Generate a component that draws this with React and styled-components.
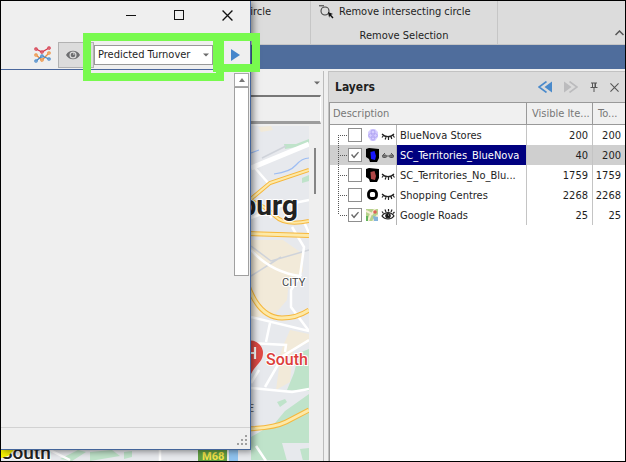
import { useState } from "react";
import styled, { createGlobalStyle } from "styled-components";

const GlobalStyle = createGlobalStyle`
  * {
    box-sizing: border-box;
  }
  body {
    margin: 0;
    background: #efefef;
    color: #1e1e1e;
    font-family: "DejaVu Sans Condensed", "Noto Sans", sans-serif;
    font-size: 11px;
    line-height: 14px;
  }
  button, input, select {
    font: inherit;
    color: inherit;
    margin: 0;
    border-radius: 0;
  }
  svg {
    display: block;
    flex: none;
  }
`;

const Desktop = styled.div`
  position: relative;
  display: flex;
  flex-direction: column;
  height: 100vh;
  overflow: hidden;
  border: 1px solid #000;
  background: #efefef;
`;

/* ---------- ribbon ---------- */

const Ribbon = styled.header`
  display: flex;
  flex: none;
  height: 44px;
  background: #dcdcdc;
  border-bottom: 1px solid #c6c6c6;
`;

const RibbonGroup = styled.div`
  display: flex;
  flex-direction: column;
  justify-content: space-between;
  flex: none;
  width: ${({ $width }) => $width}px;
  padding: 4px 8px 0;
  border-right: 1px solid #c6c6c6;
`;

const RibbonButton = styled.button`
  display: flex;
  align-items: center;
  align-self: ${({ $end }) => ($end ? "flex-end" : "flex-start")};
  gap: 5px;
  padding: 0;
  margin-right: ${({ $end }) => ($end ? 31 : 0)}px;
  border: 0;
  background: none;
  white-space: nowrap;
`;

const RibbonCaption = styled.div`
  height: 15px;
  text-align: center;
`;

const RibbonEnd = styled.div`
  display: flex;
  flex: 1;
  align-items: flex-end;
  justify-content: flex-end;
  padding: 0 1px 8px 0;
`;

const IconButton = styled.button`
  display: flex;
  align-items: center;
  justify-content: center;
  padding: 0;
  border: 0;
  background: none;
`;

const BlueBand = styled.div`
  flex: none;
  height: 24px;
  background: #4f6d9c;
`;

/* ---------- work area ---------- */

const WorkArea = styled.main`
  display: flex;
  flex: 1;
  min-height: 0;
  gap: 4px;
  padding-top: 2px;
`;

const MapPanel = styled.section`
  display: flex;
  flex-direction: column;
  flex: none;
  width: 323px;
  border-right: 1px solid #bcbcbc;
`;

const MapTabs = styled.div`
  display: flex;
  flex: none;
  align-items: center;
  justify-content: flex-end;
  height: 24px;
  padding: 0 3px 0 0;
`;

const MapToolbar = styled.div`
  flex: none;
  height: 29px;
  margin-right: 2px;
  border: 1px solid #fff;
  border-top: 2px solid #777;
  border-bottom: 3px solid #9c9c9c;
`;

const MapBody = styled.div`
  display: flex;
  flex: 1;
  min-height: 0;
  padding-top: 2px;
  overflow: hidden;
`;

const MapScroll = styled.div`
  width: 2px;
  height: 46px;
  margin: 22px 0 0 5px;
  background: #858585;
`;

/* ---------- layers ---------- */

const LayersPanel = styled.section`
  display: flex;
  flex-direction: column;
  flex: 1;
  min-width: 0;
  border: 1px solid #c2c2c2;
  border-width: 1px 0 0 1px;
`;

const LayersHeader = styled.div`
  display: flex;
  flex: none;
  align-items: center;
  justify-content: space-between;
  height: 30px;
  padding: 0 6px;
  background: #dbdbdb;
`;

const LayersTitle = styled.h2`
  margin: 0;
  font-size: 12px;
  font-weight: bold;
`;

const HeaderTools = styled.div`
  display: flex;
  align-items: center;
  gap: 12px;
`;

const LayersBody = styled.div`
  flex: 1;
  background: #fff;
  border-top: 1px solid #999;
  border-left: 1px solid #999;
`;

const LayersTable = styled.table`
  width: 100%;
  table-layout: fixed;
  border-collapse: separate;
  border-spacing: 0;
`;

const HeadCell = styled.th`
  width: ${({ $width }) => ($width ? `${$width}px` : "auto")};
  height: 22px;
  padding: 0 0 0 ${({ $width }) => ($width ? 5 : 3)}px;
  overflow: hidden;
  text-overflow: ellipsis;
  white-space: nowrap;
  text-align: left;
  font-weight: normal;
  color: #777;
  background: #f0f0f0;
  border-bottom: 1px solid #999;
  border-left: ${({ $width }) => ($width ? "1px solid #999" : "0")};
`;

const LayerRow = styled.tr`
  background: ${({ $selected }) => ($selected ? "#cfcfcf" : "#fff")};
`;

const LayerCell = styled.td`
  height: 20px;
  padding: 0;
`;

const CountCell = styled.td`
  height: 20px;
  padding: 1px 4px 0 0;
  text-align: right;
  border-left: 1px solid #c4c4c4;
`;

const LayerLine = styled.div`
  display: flex;
  align-items: center;
  height: 20px;
`;

const CheckBox = styled.input`
  appearance: none;
  display: grid;
  place-items: center;
  flex: none;
  width: 14px;
  height: 14px;
  margin-right: 4px;
  border: 1px solid #8f8f8f;
  background: #fff;

  &:checked::before {
    content: "";
    width: 8px;
    height: 8px;
    background: #6a6a6a;
    clip-path: polygon(0 50%, 14% 38%, 36% 66%, 88% 8%, 100% 20%, 38% 94%);
  }
`;

const LayerIcons = styled.span`
  display: flex;
  flex: none;
  gap: 1px;
`;

const LayerName = styled.label`
  flex: 1;
  min-width: 0;
  height: 20px;
  margin-left: 1px;
  padding: 4px 5px 2px 3px;
  overflow: hidden;
  text-overflow: ellipsis;
  white-space: nowrap;
  border-left: 1px solid #b4b4b4;
  color: ${({ $selected }) => ($selected ? "#fff" : "inherit")};
  background: ${({ $selected }) => ($selected ? "#00007f" : "none")};
`;

/* ---------- floating window ---------- */

const Dialog = styled.section`
  position: absolute;
  top: 0;
  left: 0;
  bottom: 11px;
  display: flex;
  flex-direction: column;
  width: 250px;
  background: #efefef;
  border-right: 1px solid #44659a;
  border-bottom: 1px solid #44659a;
  box-shadow: 2px 1px 7px rgba(0, 0, 0, 0.5);
`;

const TitleBar = styled.div`
  display: flex;
  flex: none;
  justify-content: flex-end;
  gap: 37px;
  height: 40px;
  padding: 8px 17px 0 0;

  ${IconButton} {
    height: 12px;
  }
`;

const DialogTools = styled.div`
  display: flex;
  flex: none;
  align-items: center;
  height: 29px;
  padding: 0 10px 1px 33px;
  border-bottom: 1px solid #4a679c;
`;

const EyeToggle = styled.button`
  display: flex;
  align-items: center;
  flex: none;
  width: 36px;
  height: 26px;
  margin-left: 5px;
  padding: 0 0 0 7px;
  border: 1px solid #b2b2b2;
  background: #dcdcdc;
`;

const PickerWrap = styled.div`
  display: grid;
  align-items: center;
  flex: none;
  width: 119px;
  height: 20px;
  border: 1px solid #999;
  background: #fff;

  > * {
    grid-area: 1 / 1;
  }
  > svg {
    justify-self: end;
    margin-right: 3px;
    pointer-events: none;
  }
`;

const Picker = styled.select`
  appearance: none;
  width: 100%;
  height: 18px;
  padding: 0 3px;
  border: 0;
  background: none;
`;

const RunButton = styled(IconButton)`
  margin-left: auto;
`;

const DialogBody = styled.div`
  display: flex;
  flex: 1;
  justify-content: flex-end;
  padding: 3px 1px 0;
`;

const ScrollBar = styled.div`
  display: flex;
  flex-direction: column;
  width: 15px;
`;

const ScrollUp = styled(IconButton)`
  height: 14px;
  border: 1px solid #a8a8a8;
  background: #fff;
`;

const ScrollThumb = styled.div`
  height: 189px;
  border: 1px solid #a0a0a0;
  background: #fff;
`;

const StatusBar = styled.div`
  display: flex;
  flex: none;
  align-items: center;
  justify-content: flex-end;
  height: 22px;
  padding: 4px 2px 0;
  border-top: 1px solid #d2d2d2;
`;

const Highlight = styled.div`
  position: absolute;
  top: 32px;
  left: ${({ $left }) => $left}px;
  width: ${({ $width }) => $width}px;
  height: ${({ $height }) => $height}px;
  border: 8px solid #78fa4e;
  pointer-events: none;
`;

/* ---------- drawings ---------- */

const DownArrow = () => (
  <svg width="6" height="4" viewBox="0 0 6 4">
    <path d="M0 0.5h6L3 3.5z" fill="#6b6b6b" />
  </svg>
);

const GraphIcon = () => {
  const lines = [
    ["#d63548", [[2, 4], [8, 7], [15, 3]]],
    ["#ee8f3c", [[2, 10], [8, 15], [15, 8]]],
    ["#4487c9", [[2, 16], [8, 11], [15, 14]]],
  ];
  return (
    <svg width="19" height="19" viewBox="0 0 19 19">
      {lines.map(([color, points]) => (
        <g key={color} stroke={color} fill="#efefef">
          <polyline points={points.join(" ")} fill="none" strokeWidth="1.300" />
          {points.map(([x, y]) => (
            <circle key={x} cx={x} cy={y} r="1.200" strokeWidth="1.200" />
          ))}
        </g>
      ))}
    </svg>
  );
};

const EyeIcon = () => (
  <svg width="14" height="10" viewBox="0 0 14 10">
    <path d="M0 5C3-.6 11-.6 14 5C11 10.600 3 10.600 0 5z" fill="#6d6e70" />
    <circle cx="7" cy="5" r="3.500" fill="#dcdcdc" />
    <circle cx="7" cy="5" r="2.300" fill="#6d6e70" />
    <circle cx="7.800" cy="4" r="0.800" fill="#dcdcdc" />
  </svg>
);

const CircleCursorIcon = () => (
  <svg width="15" height="14" viewBox="0 0 15 14">
    <path d="M0 .8h5" stroke="#333" />
    <circle cx="6" cy="6" r="4" fill="none" stroke="#444" strokeWidth="1.100" />
    <path d="M9 7l5 2-2 .8 2.500 2.700-1 .9-2.600-2.600-.8 1.900z" fill="#111" />
  </svg>
);

const DoubleArrow = ({ color, flip }) => (
  <svg width="14" height="12" viewBox="0 0 14 12">
    <g transform={flip ? "translate(14 0) scale(-1 1)" : undefined}>
      <path d="M14 .5v11L6.500 6z" fill={color} />
      <path d="M8.500.5L1 6l7.500 5.500" fill="none" stroke={color} strokeWidth="1.600" />
    </g>
  </svg>
);

const PinIcon = () => (
  <svg width="8" height="10" viewBox="0 0 8 10">
    <path d="M1 1h6M2.500 1v4M5.500 1v4M.5 5.500h7M4 6v4" stroke="#555" fill="none" />
    <path d="M5 1v4" stroke="#555" />
  </svg>
);

const CrossIcon = ({ size, color }) => (
  <svg width={size} height={size} viewBox="0 0 10 10">
    <path d="M.5.5l9 9M9.500.5l-9 9" stroke={color} strokeWidth="1.200" />
  </svg>
);

const TreeBranch = ({ first, last }) => (
  <svg width="18" height="20" viewBox="0 0 18 20">
    <path
      d={`M8.500 ${first ? 10 : 0}V${last ? 10 : 20}M10 10.500H17`}
      stroke="#555"
      strokeDasharray="1 1"
      fill="none"
    />
  </svg>
);

const Swatch = ({ kind }) => (
  <svg width="14" height="14" viewBox="0 0 14 14">
    {kind === "stores" && (
      <g fill="#d6ceff" stroke="#a89cf0" strokeWidth="0.800">
        <path d="M5 1h4l3 3v5l-3 4H5L2 9V4z" stroke="none" />
        <circle cx="7" cy="4" r="2" />
        <circle cx="4.500" cy="7.500" r="1.800" />
        <circle cx="9.500" cy="7.500" r="1.800" />
        <circle cx="7" cy="10.500" r="1.600" />
      </g>
    )}
    {(kind === "blue" || kind === "red") && (
      <>
        <path d="M0 1l3-1 10 1v9l-2 4H4l-1-3-3-2z" fill="#000" />
        <path d="M4.500 4l4-1 1.500 5-1 4-4-1z" fill={kind === "blue" ? "#1818ff" : "#b04747"} />
      </>
    )}
    {kind === "ring" && (
      <rect x="2.500" y="2.500" width="8" height="8" rx="3" fill="#fff" stroke="#000" strokeWidth="2.800" />
    )}
    {kind === "roads" && (
      <>
        <rect x="0" y="1" width="12" height="12" fill="#b6d28d" />
        <path d="M0 3l6 3 3-5M2 13l3-7M7 13l5-6" stroke="#f6eed5" strokeWidth="2" fill="none" />
        <circle cx="9" cy="4" r="1.800" fill="#df6157" />
        <path d="M7 8l5 1v4H8z" fill="#83b4dc" />
        <path d="M0 8h2v5H0z" fill="#63b75c" />
      </>
    )}
  </svg>
);

const SightIcon = ({ kind }) => (
  <svg width="14" height="14" viewBox="0 0 14 14">
    {kind === "closed" && (
      <path
        d="M1 6c3 3.500 9 3.500 12 0M2.500 7.500L1 9.500M5 9l-.8 2.500M7.500 9v3M10 8.500l.8 2.500M12 7.500l1.500 2"
        fill="none"
        stroke="#222"
        strokeWidth="1.200"
      />
    )}
    {kind === "glasses" && (
      <g fill="#777" stroke="#555">
        <path d="M1.500 7.500L4 5M12.500 7.500L10 5M6 8h2" />
        <rect x="1.500" y="7" width="4" height="2.500" rx="1" />
        <rect x="8.500" y="7" width="4" height="2.500" rx="1" />
      </g>
    )}
    {kind === "open" && (
      <g fill="none" stroke="#222" strokeWidth="1.200">
        <path d="M1 8c3-4.500 9-4.500 12 0c-3 4-9 4-12 0z" />
        <path d="M2.500 5.500L1 3.500M5 4L4 1.500M7.500 3.500V1M10 4l1-2.500M12 5.500l1.500-1.500" />
        <circle cx="7" cy="7.800" r="2.200" fill="#111" />
        <circle cx="7.500" cy="7" r="0.500" fill="#fff" stroke="none" />
      </g>
    )}
  </svg>
);

const Grip = () => (
  <svg width="11" height="11" viewBox="0 0 11 11" fill="#a0a0a0">
    <path d="M8 0h2v2H8zM4 4h2v2H4zM8 4h2v2H8zM0 8h2v2H0zM4 8h2v2H4zM8 8h2v2H8z" />
  </svg>
);

const Highway = ({ d, width = 4 }) => (
  <g fill="none">
    <path d={d} stroke="#f6b73c" strokeWidth={width} />
    <path d={d} stroke="#fde9a8" strokeWidth={width - 2} />
  </g>
);

const StreetMap = () => (
  <svg width="308" height="335" viewBox="1 126 308 335" fontFamily="Roboto, sans-serif">
    <rect x="1" y="126" width="308" height="335" fill="#e7e9ed" />
    <g fill="#f2ead9">
      <path d="M258 127l13-1 2 4-12 2z" />
      <path d="M240 240l43 0 20 14 0 18-14 8-2 20-12 14-24 4z" />
      <path d="M284 345l10-3-4 40-14 8 3-22z" />
      <path d="M290 330l19 4v8l-30 16 4-12z" />
    </g>
    <g fill="#bfe3ca">
      <path d="M284 144l12 0 13-5v6l-24 4z" />
      <path d="M302 178l7-3v6l-7 2z" />
      <path d="M309 349l-10 4-5 20-7 17 22 1z" />
      <path d="M277 402l8-3 2 3-7 5z" />
      <path d="M251 437l24-14 10-12 24-17v66h-58z" />
      <path d="M90 452l22-2 8 6-30 5zM60 459l18-9 8 2-14 9zM124 452l8-1v6l-8 2z" />
    </g>
    <path d="M282 443l27 0v5l-9 1 3 12h-16z" fill="#e7e9ed" />
    <g fill="none" stroke="#cfd3da" strokeWidth="1.500">
      <path d="M251 246l20 15 38-11M251 276l30-19M262 158l24-12" />
    </g>
    <g fill="none" stroke="#9dbdf3" strokeWidth="1.200">
      <path d="M274 174q16-2 22-9t13-7M251 153l8-3" />
    </g>
    <g fill="none" stroke="#fff" strokeWidth="2.500">
      <path d="M251 168L309 144" strokeWidth="5" />
      <path d="M255 168l14 16M270 218l10-12 29-6M251 218l20-8M292 227l12 20-4 29" />
      <path d="M251 250q20 22 49 26l-9 14 0 17 18 24" />
      <path d="M304 222l5 11M251 317l58 14M270 323l-4 19M251 343l35 2-1 7M309 340l-26 16-18 31" />
      <path d="M251 388l41 4 17-3M251 383l8-13M256 446l10 15" />
      <path d="M160 449v12M50 450l20 10" />
    </g>
    <Highway d="M246 203l24-20 39-13" />
    <Highway d="M251 201q14 5 24 15t34 5" />
    <Highway d="M246 233.500l63 2" width={5} />
    <Highway d="M246 280q12 38 36 38 15 0 27-8" width={5} />
    <Highway d="M246 429q28-1 40-7l23-12" width={5} />
    <text x="298" y="215" textAnchor="end" fontSize="28" fontWeight="700" fill="#222" stroke="#fff" strokeWidth="2" paintOrder="stroke">
      burg
    </text>
    <text x="282" y="286" fontSize="11" fill="#444" stroke="#fff" strokeWidth="2" paintOrder="stroke">
      CITY
    </text>
    <path d="M251 374C245 364 238 362 238 353a12.500 12.500 0 0 1 25 0C263 362 256 364 251 374z" fill="#df4a45" />
    <path d="M255 347v12M247 347v12M247 353h8" stroke="#fff" strokeWidth="2.200" />
    <text x="266" y="365" fontSize="16" fontWeight="500" fill="#dd3e3a" stroke="#fff" strokeWidth="2" paintOrder="stroke">
      South
    </text>
    <text x="254" y="412" textAnchor="end" fontSize="10" fill="#555">
      E
    </text>
    <text x="1" y="459" fontSize="19" fontWeight="500" fill="#222" stroke="#fff" strokeWidth="2" paintOrder="stroke">
      South
    </text>
    <path d="M1 449h14l-7 7-7 2z" fill="#f8f400" />
    <rect x="198" y="446" width="29" height="15" fill="#63a046" />
    <text x="202" y="460" fontSize="11" fontWeight="700" fill="#f5e34a">
      M68
    </text>
    <path d="M229 448h9v13h-9z" fill="#8fc3ef" />
  </svg>
);

const initialLayers = [
  { name: "BlueNova Stores", swatch: "stores", sight: "closed", visible: 200, total: 200, checked: false },
  { name: "SC_Territories_BlueNova", swatch: "blue", sight: "glasses", visible: 40, total: 200, checked: true },
  { name: "SC_Territories_No_Blu...", swatch: "red", sight: "closed", visible: 1759, total: 1759, checked: false },
  { name: "Shopping Centres", swatch: "ring", sight: "closed", visible: 2268, total: 2268, checked: false },
  { name: "Google Roads", swatch: "roads", sight: "open", visible: 25, total: 25, checked: true },
];

const Layers = () => {
  const [layers, setLayers] = useState(initialLayers);
  const selected = "SC_Territories_BlueNova";

  const toggleLayer = (name) => {
    setLayers(
      layers.map((layer) =>
        layer.name === name ? { ...layer, checked: !layer.checked } : layer
      )
    );
  };

  return (
    <LayersPanel>
      <LayersHeader>
        <LayersTitle>Layers</LayersTitle>
        <HeaderTools>
          <IconButton aria-label="Previous">
            <DoubleArrow color="#4a8acb" />
          </IconButton>
          <IconButton aria-label="Next">
            <DoubleArrow color="#bbbbbd" flip />
          </IconButton>
          <IconButton aria-label="Pin">
            <PinIcon />
          </IconButton>
          <IconButton aria-label="Close layers">
            <CrossIcon size={9} color="#555" />
          </IconButton>
        </HeaderTools>
      </LayersHeader>
      <LayersBody>
        <LayersTable>
          <thead>
            <tr>
              <HeadCell>Description</HeadCell>
              <HeadCell $width={66}>Visible Ite...</HeadCell>
              <HeadCell $width={33}>To...</HeadCell>
            </tr>
          </thead>
          <tbody>
            {layers.map((layer, i) => (
              <LayerRow key={layer.name} $selected={layer.name === selected}>
                <LayerCell>
                  <LayerLine>
                    <TreeBranch first={i === 0} last={i === layers.length - 1} />
                    <CheckBox
                      type="checkbox"
                      id={`layer-${i}`}
                      checked={layer.checked}
                      onChange={() => toggleLayer(layer.name)}
                    />
                    <LayerIcons>
                      <Swatch kind={layer.swatch} />
                      <SightIcon kind={layer.sight} />
                    </LayerIcons>
                    <LayerName htmlFor={`layer-${i}`} $selected={layer.name === selected}>
                      {layer.name}
                    </LayerName>
                  </LayerLine>
                </LayerCell>
                <CountCell>{layer.visible}</CountCell>
                <CountCell>{layer.total}</CountCell>
              </LayerRow>
            ))}
          </tbody>
        </LayersTable>
      </LayersBody>
    </LayersPanel>
  );
};

const TurnoverWindow = () => (
  <Dialog>
    <TitleBar>
      <IconButton aria-label="Minimize">
        <svg width="11" height="11" viewBox="0 0 11 11">
          <path d="M0 5.500h10" stroke="#111" />
        </svg>
      </IconButton>
      <IconButton aria-label="Maximize">
        <svg width="11" height="11" viewBox="0 0 11 11">
          <rect x="0.500" y="0.500" width="9" height="9" fill="none" stroke="#111" />
        </svg>
      </IconButton>
      <IconButton aria-label="Close">
        <CrossIcon size={11} color="#111" />
      </IconButton>
    </TitleBar>
    <DialogTools>
      <IconButton aria-label="Graph">
        <GraphIcon />
      </IconButton>
      <EyeToggle aria-label="Preview">
        <EyeIcon />
      </EyeToggle>
      <PickerWrap>
        <Picker aria-label="Measure" defaultValue="Predicted Turnover">
          <option>Predicted Turnover</option>
        </Picker>
        <DownArrow />
      </PickerWrap>
      <RunButton aria-label="Run">
        <svg width="9" height="12" viewBox="0 0 9 12">
          <path d="M0 0l9 6-9 6z" fill="#4686cb" />
        </svg>
      </RunButton>
    </DialogTools>
    <DialogBody>
      <ScrollBar>
        <ScrollUp aria-label="Scroll up">
          <svg width="6" height="4" viewBox="0 0 6 4">
            <path d="M0 4h6L3 0z" fill="#777" />
          </svg>
        </ScrollUp>
        <ScrollThumb />
      </ScrollBar>
    </DialogBody>
    <StatusBar>
      <Grip />
    </StatusBar>
  </Dialog>
);

const App = () => {
  return (
    <Desktop>
      <GlobalStyle />
      <Ribbon>
        <RibbonGroup $width={310}>
          <RibbonButton $end>circle</RibbonButton>
        </RibbonGroup>
        <RibbonGroup $width={187}>
          <RibbonButton>
            <CircleCursorIcon />
            Remove intersecting circle
          </RibbonButton>
          <RibbonCaption>Remove Selection</RibbonCaption>
        </RibbonGroup>
        <RibbonEnd>
          <IconButton aria-label="Collapse ribbon">
            <svg width="9" height="6" viewBox="0 0 9 6">
              <path d="M.5 5l4-4 4 4" fill="none" stroke="#555" strokeWidth="1.500" />
            </svg>
          </IconButton>
        </RibbonEnd>
      </Ribbon>
      <BlueBand />
      <WorkArea>
        <MapPanel>
          <MapTabs>
            <DownArrow />
          </MapTabs>
          <MapToolbar />
          <MapBody>
            <StreetMap />
            <MapScroll />
          </MapBody>
        </MapPanel>
        <Layers />
      </WorkArea>
      <TurnoverWindow />
      <Highlight $left={82} $width={141} $height={48} />
      <Highlight $left={212} $width={47} $height={39} />
    </Desktop>
  );
};

export default App;
